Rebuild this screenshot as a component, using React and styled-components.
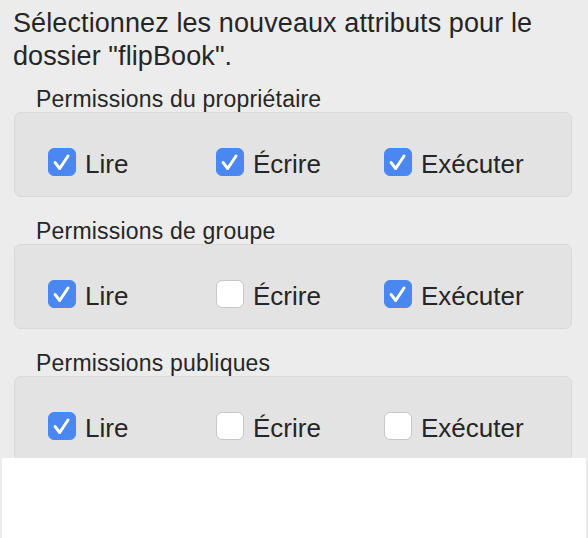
import React from 'react';
import styled, {createGlobalStyle} from 'styled-components';

const GlobalStyle = createGlobalStyle`
    html, body {
        margin: 0;
        padding: 0;
        background: #ececec;
    }
    body {
        font-family: "Liberation Sans", Arial, sans-serif;
        color: #262626;
        -webkit-font-smoothing: antialiased;
    }
`;

const Panel = styled.div`
    height: 458px;
    overflow: hidden;
    padding: 7px 16px 0 14px;
    box-sizing: border-box;
`;

const Title = styled.div`
    font-size: 27px;
    line-height: 33px;
    margin-left: -1px;
    letter-spacing: 0.1px;
`;

const GroupLabel = styled.div`
    font-size: 23px;
    line-height: 26px;
    padding-left: 22px;
    margin-top: ${props => props.first ? '13px' : '21px'};
    letter-spacing: 0.2px;
`;

const GroupBox = styled.div`
    height: 85px;
    box-sizing: border-box;
    padding: 35px 0 0 33px;
    background: #e3e3e3;
    border: 1px solid #d9d9d9;
    border-radius: 7px;
`;

const Row = styled.div`
    display: grid;
    grid-template-columns: repeat(3, 168px);
    height: 28px;
`;

const Option = styled.label`
    display: flex;
    align-items: flex-start;
    gap: 9px;
`;

const Box = styled.span`
    width: 28px;
    height: 28px;
    box-sizing: border-box;
    border-radius: 6px;
    display: flex;
    align-items: center;
    justify-content: center;
    background: ${props => props.checked ? '#4a87f0' : '#ffffff'};
    border: 1px solid ${props => props.checked ? '#4a87f0' : '#c6c6c6'};
`;

const OptionText = styled.span`
    font-size: 26px;
    line-height: 28px;
    margin-top: 2px;
`;

const Footer = styled.div`
    height: 80px;
    margin: 0 2px;
    background: #ffffff;
`;

const CheckMark = () => (
    <svg width="28" height="28" viewBox="0 0 28 28">
        <path d="M6.5 14.5 L11.5 21 L20.5 7.5" fill="none" stroke="#ffffff"
              strokeWidth="3.2" strokeLinecap="round" strokeLinejoin="round"/>
    </svg>
);

const Checkbox = ({checked, label}) => (
    <Option>
        <Box checked={checked}>{checked && <CheckMark/>}</Box>
        <OptionText>{label}</OptionText>
    </Option>
);

const groups = [
    {title: 'Permissions du propriétaire', values: [true, true, true]},
    {title: 'Permissions de groupe', values: [true, false, true]},
    {title: 'Permissions publiques', values: [true, false, false]},
];

const labels = ['Lire', 'Écrire', 'Exécuter'];

export default function App() {
    return (
        <>
            <GlobalStyle/>
            <Panel>
                <Title>
                    Sélectionnez les nouveaux attributs pour le<br/>
                    dossier "flipBook".
                </Title>
                {groups.map((g, i) => (
                    <React.Fragment key={g.title}>
                        <GroupLabel first={i === 0}>{g.title}</GroupLabel>
                        <GroupBox>
                            <Row>
                                {labels.map((l, j) => (
                                    <Checkbox key={l} label={l} checked={g.values[j]}/>
                                ))}
                            </Row>
                        </GroupBox>
                    </React.Fragment>
                ))}
            </Panel>
            <Footer/>
        </>
    );
}
